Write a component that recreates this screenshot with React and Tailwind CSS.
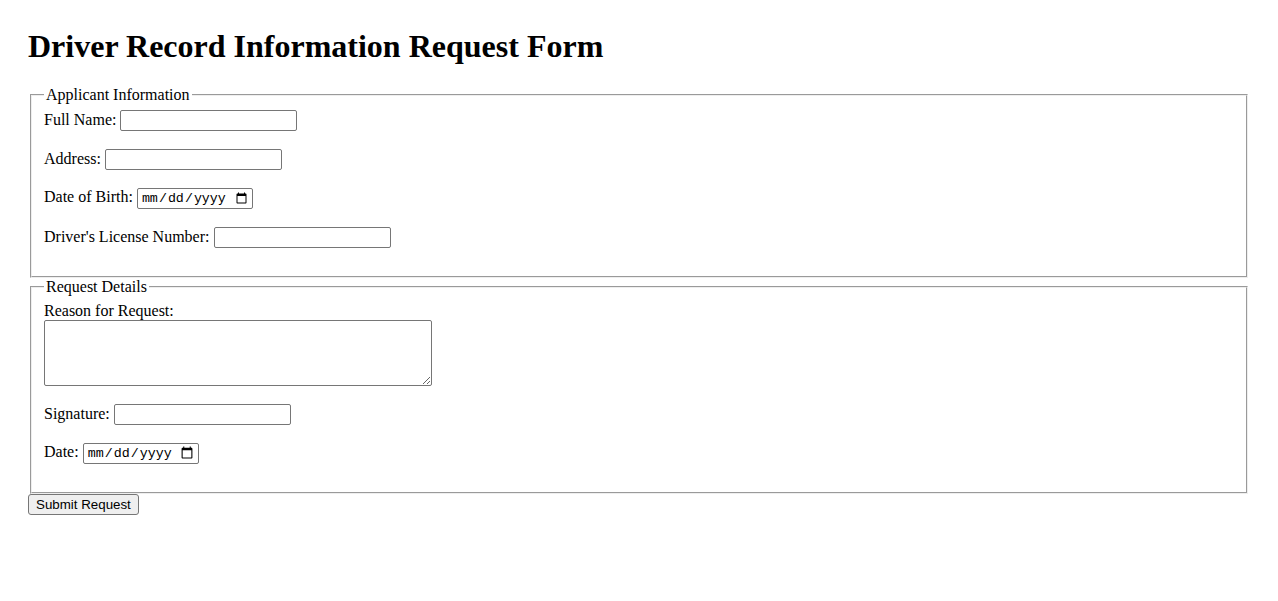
import { useState } from 'react'

const textInput =
    "w-[177px] h-[21px] border border-[#767676] rounded-[2px] px-[2px] py-[1px] bg-white text-[13.33px] font-['Liberation_Sans',Arial,sans-serif] align-baseline"
const dateInput =
    "w-[116px] h-[21px] border border-[#767676] rounded-[2px] pl-[3px] pr-[2px] py-[1px] bg-white text-[13.33px] font-['Liberation_Mono',monospace] align-baseline"
const fieldset =
    "mx-[2px] border-2 [border-style:groove] border-[#eeeeee] px-3 pt-[5.6px] pb-[10px] min-w-0"

function Row({ label, children }) {
    return (
        <div className="mb-[18px]">
            <label>{label}</label> {children}
        </div>
    )
}

export default function App() {
    const [form, setForm] = useState({
        name: '', address: '', dob: '', license: '', reason: '', signature: '', date: '',
    })
    const set = key => e => setForm(f => ({ ...f, [key]: e.target.value }))

    return (
        <div className="min-h-screen bg-white text-black p-7 font-['Liberation_Serif','Times_New_Roman',serif] text-[16px] leading-[normal]">
            <h1 className="text-[32px] font-bold leading-[normal] mb-[21.44px]">
                Driver Record Information Request Form
            </h1>
            <form onSubmit={e => e.preventDefault()}>
                <fieldset className={fieldset}>
                    <legend className="px-[2px]">Applicant Information</legend>
                    <Row label="Full Name:">
                        <input type="text" className={textInput} value={form.name} onChange={set('name')} />
                    </Row>
                    <Row label="Address:">
                        <input type="text" className={textInput} value={form.address} onChange={set('address')} />
                    </Row>
                    <Row label="Date of Birth:">
                        <input type="date" className={dateInput} value={form.dob} onChange={set('dob')} />
                    </Row>
                    <Row label="Driver's License Number:">
                        <input type="text" className={textInput} value={form.license} onChange={set('license')} />
                    </Row>
                </fieldset>
                <fieldset className={fieldset}>
                    <legend className="px-[2px]">Request Details</legend>
                    <div className="mb-[18px]">
                        <label className="block">Reason for Request:</label>
                        <textarea
                            className="block w-[388px] h-[66px] border border-[#767676] rounded-[2px] p-[2px] bg-white text-[13.33px] font-['Liberation_Mono',monospace]"
                            value={form.reason}
                            onChange={set('reason')}
                        />
                    </div>
                    <Row label="Signature:">
                        <input type="text" className={textInput} value={form.signature} onChange={set('signature')} />
                    </Row>
                    <Row label="Date:">
                        <input type="date" className={dateInput} value={form.date} onChange={set('date')} />
                    </Row>
                </fieldset>
                <button
                    type="submit"
                    className="h-[21px] px-[7px] border border-[#767676] rounded-[3px] bg-[#efefef] text-[13.33px] font-['Liberation_Sans',Arial,sans-serif] leading-[normal]"
                >
                    Submit Request
                </button>
            </form>
        </div>
    )
}
